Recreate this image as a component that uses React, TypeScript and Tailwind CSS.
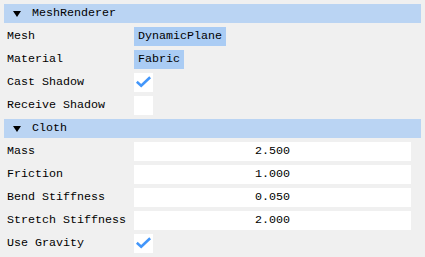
import React from "react";

type Row =
  | { label: string; kind: "button"; value: string }
  | { label: string; kind: "check"; checked: boolean }
  | { label: string; kind: "number"; value: string };

const sections: { title: string; rows: Row[] }[] = [
  {
    title: "MeshRenderer",
    rows: [
      { label: "Mesh", kind: "button", value: "DynamicPlane" },
      { label: "Material", kind: "button", value: "Fabric" },
      { label: "Cast Shadow", kind: "check", checked: true },
      { label: "Receive Shadow", kind: "check", checked: false },
    ],
  },
  {
    title: "Cloth",
    rows: [
      { label: "Mass", kind: "number", value: "2.500" },
      { label: "Friction", kind: "number", value: "1.000" },
      { label: "Bend Stiffness", kind: "number", value: "0.050" },
      { label: "Stretch Stiffness", kind: "number", value: "2.000" },
      { label: "Use Gravity", kind: "check", checked: true },
    ],
  },
];

function Check({ checked }: { checked: boolean }) {
  return (
    <div className="w-[19px] h-[19px] bg-white">
      {checked && (
        <svg width="19" height="19" viewBox="0 0 19 19">
          <path d="M3.8 9.6 L7.2 12.8 L15.2 5.2" fill="none" stroke="#4296fa" strokeWidth="2.6" strokeLinecap="square" />
        </svg>
      )}
    </div>
  );
}

function Value({ row }: { row: Row }) {
  if (row.kind === "check") return <Check checked={row.checked} />;
  if (row.kind === "button")
    return <div className="h-[19px] px-[4px] bg-[#aaccf4] flex items-center">{row.value}</div>;
  return <div className="h-[19px] w-[277px] bg-white flex items-center justify-center">{row.value}</div>;
}

export default function App() {
  return (
    <div
      className="w-[425px] h-[257px] bg-[#f0f0f0] pt-[4px] px-[4px] flex flex-col gap-[4px] text-black text-[11.67px] leading-[13px]"
      style={{ fontFamily: '"Liberation Mono", "DejaVu Sans Mono", monospace' }}
    >
      {sections.map((s) => (
        <React.Fragment key={s.title}>
          <div className="h-[19px] bg-[#bad4f3] flex items-center">
            <svg width="8" height="6" viewBox="0 0 8 6" className="ml-[9px] mr-[11px]">
              <polygon points="0,0 8,0 4,6" fill="#000" />
            </svg>
            <span>{s.title}</span>
          </div>
          {s.rows.map((r) => (
            <div key={r.label} className="h-[19px] flex items-center">
              <div className="w-[130px] pl-[3px]">{r.label}</div>
              <Value row={r} />
            </div>
          ))}
        </React.Fragment>
      ))}
    </div>
  );
}
